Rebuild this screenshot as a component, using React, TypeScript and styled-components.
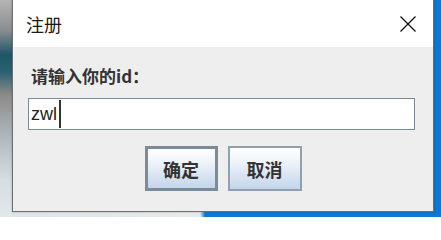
import React from 'react';
import styled, { createGlobalStyle } from 'styled-components';

const GlobalStyle = createGlobalStyle`
  html, body {
    margin: 0;
    padding: 0;
    width: 441px;
    height: 217px;
    overflow: hidden;
  }
  body {
    font-family: 'Noto Sans CJK SC', 'Liberation Sans', sans-serif;
  }
`;

const Desktop = styled.div`
  width: 441px;
  height: 217px;
  box-sizing: border-box;
  padding: 0 7px 5px 12px;
  display: flex;
  background:
    linear-gradient(
        to bottom,
        #b4b4b4 0px,
        #8a8e90 30px,
        #1d5666 55px,
        #2a6270 72px,
        #8d8b88 95px,
        #a8b2b6 130px,
        #d6dde1 180px,
        #e2e7ea 217px
      )
      0 0 / 12px 100% no-repeat,
    linear-gradient(to right, #dde3e7 0, #e6eaed 200px, #0b78d3 205px)
      0 100% / 100% 6px no-repeat,
    #0b78d3;
`;

const Window = styled.div`
  flex: 1;
  display: flex;
  flex-direction: column;
  border: 1px solid #6e6e6e;
  border-top: none;
  background: #eeeeee;
  box-shadow: 0 0 2px rgba(0, 0, 0, 0.25);
`;

const TitleBar = styled.div`
  height: 47px;
  display: flex;
  align-items: center;
  justify-content: space-between;
  padding: 0 16px 0 13px;
  background: #ffffff;
`;

const Title = styled.span`
  font-size: 18px;
  color: #1a1a1a;
`;

const CloseIcon = styled.svg`
  width: 18px;
  height: 18px;
  display: block;
`;

const Body = styled.div`
  flex: 1;
  display: flex;
  flex-direction: column;
  padding: 18px 18px 19px 15px;
`;

const Label = styled.div`
  font-size: 17px;
  font-weight: bold;
  color: #333333;
  line-height: 22px;
  padding-left: 3px;
`;

const InputBox = styled.div`
  margin-top: 11px;
  height: 32px;
  box-sizing: border-box;
  border: 1px solid #7a8a99;
  background: #ffffff;
  display: flex;
  align-items: center;
  padding-left: 2px;
`;

const InputText = styled.span`
  font-family: 'Liberation Sans', Arial, sans-serif;
  font-size: 18px;
  color: #222222;
`;

const Caret = styled.span`
  width: 2px;
  height: 28px;
  margin-left: 2px;
  background: #333333;
`;

const ButtonRow = styled.div`
  margin: 16px -18px 0 -15px;
  display: flex;
  justify-content: center;
  gap: 10px;
`;

const Button = styled.button<{ focused?: boolean }>`
  width: ${p => (p.focused ? 73 : 74)}px;
  height: 45px;
  box-sizing: border-box;
  border: ${p => (p.focused ? '3px solid #7a8c9c' : '2px solid #8fa0b0')};
  background: linear-gradient(to bottom, #ffffff 0%, #eef3f9 35%, #c3d5ea 100%);
  font-family: 'Noto Sans CJK SC', sans-serif;
  font-size: 18px;
  font-weight: bold;
  color: #333333;
  padding: 0;
`;

export default function App() {
  return (
    <>
      <GlobalStyle />
      <Desktop>
        <Window>
          <TitleBar>
            <Title>注册</Title>
            <CloseIcon viewBox="0 0 18 18">
              <path d="M1.5 1.5 L16.5 16.5 M16.5 1.5 L1.5 16.5" stroke="#111" strokeWidth="1.3" />
            </CloseIcon>
          </TitleBar>
          <Body>
            <Label>请输入你的id：</Label>
            <InputBox>
              <InputText>zwl</InputText>
              <Caret />
            </InputBox>
            <ButtonRow>
              <Button focused>确定</Button>
              <Button>取消</Button>
            </ButtonRow>
          </Body>
        </Window>
      </Desktop>
    </>
  );
}
